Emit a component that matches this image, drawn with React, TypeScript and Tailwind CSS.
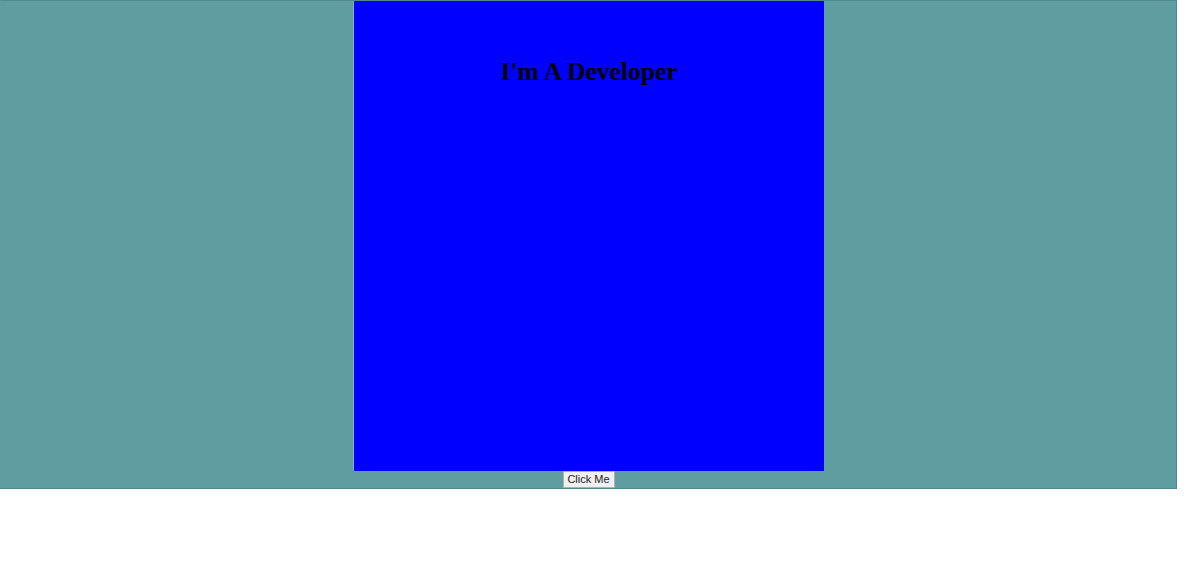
import React from "react";

export default function App() {
  return (
    <div className="w-[1200px] h-[566px] bg-white">
      <div className="w-[1177px] h-[489px] bg-[#5f9ea0] border border-[#4f8a8c] border-l-[#5f9ea0] flex flex-col items-center">
        <div className="w-[471px] h-[470px] bg-[#0000ff] border-l border-[#7fb3b5] flex flex-col items-center">
          <h2 className="mt-[56px] text-[25.5px] font-bold leading-[30px] text-black [font-family:'Liberation_Serif',serif]">
            I&apos;m A Developer
          </h2>
        </div>
        <button className="w-[52px] h-[17px] bg-[#f0f0f0] border border-[#b0b0b0] text-[11px] leading-[15px] text-[#222] [font-family:'Liberation_Sans',Arial,sans-serif]">
          Click Me
        </button>
      </div>
    </div>
  );
}
